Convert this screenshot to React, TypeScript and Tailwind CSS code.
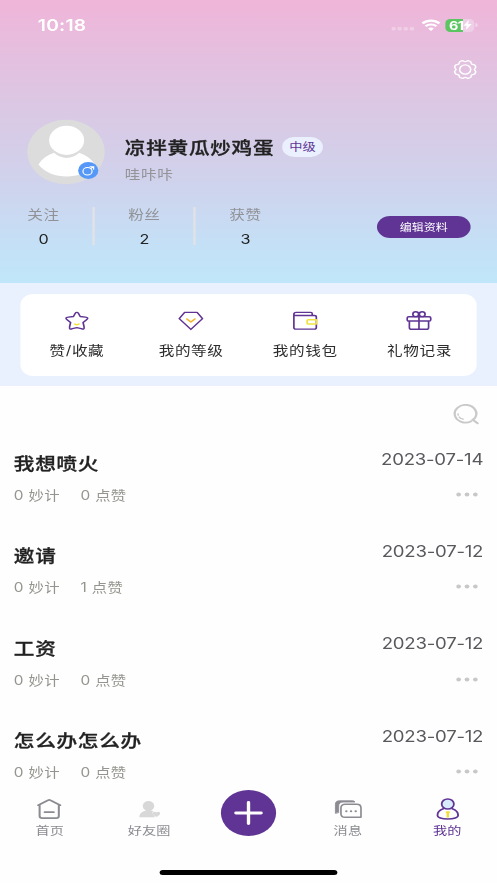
import type { ReactNode } from 'react'

const PURPLE = '#5f3494'

const stats = [
  { label: '关注', value: 0 },
  { label: '粉丝', value: 2 },
  { label: '获赞', value: 3 },
]

const notes = [
  { title: '我想喷火', likes: 0, date: '2023-07-14' },
  { title: '邀请', likes: 1, date: '2023-07-12' },
  { title: '工资', likes: 0, date: '2023-07-12' },
  { title: '怎么办怎么办', likes: 0, date: '2023-07-12' },
]

function StatusBar() {
  return (
    <div className="flex h-[50px] items-center justify-between pl-[31.5px] pr-[16.5px] text-white">
      <span className="text-[16px] font-semibold leading-none tracking-[0.2px]">10:18</span>
      <div className="flex items-center">
        <svg width="20" height="4" viewBox="0 0 20 4" className="mr-[5px] mt-[7px]" fill="#fff" fillOpacity=".3">
          <rect x="0" width="3.6" height="3.6" rx="1.3" />
          <rect x="5.1" width="3.6" height="3.6" rx="1.3" />
          <rect x="10.2" width="3.6" height="3.6" rx="1.3" />
          <rect x="15.3" width="3.6" height="3.6" rx="1.3" />
        </svg>
        <svg width="16" height="12" viewBox="0 0 16 12" className="mr-[4.5px]" fill="none" stroke="#fff" strokeWidth="2.2">
          <path d="M.9 4.4C4.9.6 11.1.6 15.1 4.4" />
          <path d="M3.5 7.3c2.5-2.4 6.5-2.4 9 0" />
          <path d="M8 12 5.6 9.5c1.3-1.3 3.5-1.3 4.8 0Z" fill="#fff" stroke="none" />
        </svg>
        <div className="flex h-[13px] w-6 items-center overflow-hidden rounded-[4px] bg-[linear-gradient(90deg,#5bc562_61%,#efcfe8_61%)] pl-[3px]">
          <span className="text-[12px] font-bold leading-[13px] tracking-[-0.4px]">61</span>
          <svg width="7" height="10" viewBox="0 0 7 10" fill="#fff" className="shrink-0">
            <path d="M4.600 0 0 5.700h2.700L2 10l5-5.900H4Z" />
          </svg>
        </div>
        <span className="ml-px h-1 w-[1.5px] rounded-r bg-white/40" />
      </div>
    </div>
  )
}

function GearIcon() {
  return (
    <svg width="21" height="21" viewBox="0 0 21 21" fill="none" stroke="#fff" strokeWidth="1.3" strokeLinejoin="round">
      <path d="M8.1 1.7c.7-.4 1.1 1 2.4 1s1.7-1.4 2.4-1l2 .8c.8.4.1 1.5 1 2.5s2.2.3 2.6 1.1l.8 2c.3.8-1.1 1.1-1.1 2.4s1.4 1.6 1.1 2.4l-.8 2c-.4.8-1.7.1-2.6 1.1s-.2 2.1-1 2.5l-2 .8c-.7.3-1.1-1-2.4-1s-1.7 1.3-2.4 1l-2-.8c-.8-.4-.1-1.5-1-2.5s-2.2-.3-2.6-1.1l-.8-2c-.3-.8 1.1-1.1 1.1-2.4S1.4 8.900 1.700 8.100l.8-2c.4-.8 1.700-.1 2.600-1.100s.2-2.100 1-2.500Z" />
      <circle cx="10.5" cy="10.5" r="4.6" />
    </svg>
  )
}

function Avatar() {
  return (
    <svg width="66" height="66" viewBox="0 0 66 66" fill="none">
      <circle cx="33" cy="33" r="32.3" fill="#dcdcdc" />
      <circle cx="33.5" cy="21.3" r="14.6" fill="#fff" />
      <path d="M10 45.500C13 40 17.500 36 23 33.800c6 6.800 15 6.800 21 0 5.500 2.200 10 6.200 13 11.700C51 54 42.500 57.500 33.500 57.500S16 54 10 45.500Z" fill="#fff" />
      <circle cx="51.5" cy="51.5" r="8.400" fill="#5598f8" />
      <g stroke="#fff" strokeWidth="1" strokeLinecap="round">
        <circle cx="50.900" cy="52.200" r="3.800" />
        <path d="m53.600 49.600 2-1.700m-2.600-.2h3v2.600" />
      </g>
    </svg>
  )
}

function Profile() {
  return (
    <header className="h-[283px] bg-[linear-gradient(180deg,#f0b6d9_0px,#edb7da_12px,#dcc7e3_100px,#d0d2ec_180px,#c4e0f6_245px,#c0e6fa_283px)]">
      <StatusBar />
      <div className="flex justify-end pr-[16.5px] pt-[8.5px]">
        <GearIcon />
      </div>
      <div className="mt-[39.5px] flex pl-[21.5px]">
        <Avatar />
        <div className="pl-[16.5px] pt-[17px]">
          <div className="flex items-center">
            <h1 className="text-[17.2px] font-medium leading-[24px] tracking-[0.6px] text-[#222] [-webkit-text-stroke:0.3px_#222]">
              凉拌黄瓜炒鸡蛋
            </h1>
            <span className="relative -top-px ml-[6.5px] h-5 w-[34px] rounded-full bg-[#eaf0fe] text-center text-[11px] leading-[20px] text-[#5f3494]">
              中级
            </span>
          </div>
          <p className="mt-[4px] text-[13px] leading-[20px] tracking-[0.5px] text-[#939398]">哇咔咔</p>
        </div>
      </div>
      <div className="mt-[19px] flex items-start">
        <div className="-ml-[5.5px] flex w-[245px]">
          {stats.map((s, i) => (
            <div key={s.label} className="flex w-[84px] shrink-0 justify-between">
              <div className="flex-1 text-center">
                <div className="text-[13px] leading-[20px] tracking-[0.5px] text-[#919297]">{s.label}</div>
                <div className="mt-[6px] text-[13.5px] leading-[18px] text-[#222]">{s.value}</div>
              </div>
              {i < 2 && <span className="-ml-px mt-[3px] h-[38px] w-[1.5px] bg-[#e1e2e6]" />}
            </div>
          ))}
        </div>
        <button className="ml-auto mr-[22px] mt-[12px] h-[22px] w-[78px] rounded-full bg-[#5f3494] text-[10px] leading-[22px] text-white">
          编辑资料
        </button>
      </div>
    </header>
  )
}

function Shortcut({ label, children }: { label: string; children: ReactNode }) {
  return (
    <div className="flex flex-1 flex-col items-center pt-[16px]">
      <svg width="22" height="22" viewBox="0 0 22 22" fill="none" stroke={PURPLE} strokeWidth="1.4" strokeLinejoin="round" strokeLinecap="round">
        {children}
      </svg>
      <span className="mt-[8px] text-[13px] leading-[20px] tracking-[0.5px] text-[#2c2c2c]">{label}</span>
    </div>
  )
}

function Shortcuts() {
  return (
    <section className="h-[103px] bg-[#eaf1fe] pl-[16.5px] pr-[17px] pt-[11px]">
      <div className="flex h-[82px] rounded-[11px] bg-white">
        <Shortcut label="赞/收藏">
          <path d="M9.700 3.300c.6-1.200 2-1.200 2.600 0l1.500 3.200 4.300.6c2.200.3 2.500 1.300 1 2.700l-2.900 2.700.8 4.200c.4 2.300-.3 2.900-2.300 1.900L11 17.600l-3.700 1c-2 1-2.700.4-2.300-1.900l.8-4.200-2.900-2.700c-1.500-1.400-1.200-2.400 1-2.700l4.300-.6Z" />
          <path d="M9.200 14c.8.9 2.800.9 3.600 0" stroke="#f1e33c" />
        </Shortcut>
        <Shortcut label="我的等级">
          <path d="M5.800 2.400h10.400l4.500 6.200L11 19.400 1.300 8.600Z" />
          <path d="m7.700 9 3.300 3 3.300-3" stroke="#f3b52e" strokeWidth="1.5" />
        </Shortcut>
        <Shortcut label="我的钱包">
          <path d="M1.800 4.300c0-1.200.7-1.900 1.900-1.900h12.200c.8 0 1.200.5 1.200 1.300v1.800M1.800 4.300v13.200c0 1 .6 1.600 1.600 1.600h15.500c1 0 1.600-.6 1.600-1.600V7.100c0-1-.6-1.600-1.600-1.600H3c-.8 0-1.200-.5-1.200-1.200Z" />
          <path d="M20.500 9.700h-6.700c-.6 0-.9.3-.9.9v2.600c0 .6.3.9.9.9h6.700Z" stroke="#f1e33c" strokeWidth="1.5" />
        </Shortcut>
        <Shortcut label="礼物记录">
          <path d="M2.400 6.700h17.200c.8 0 1.200.4 1.200 1.200v1.900c0 .8-.4 1.200-1.200 1.200H2.400c-.8 0-1.200-.4-1.200-1.200V7.900c0-.8.4-1.200 1.200-1.200ZM3 11.200v6.200c0 1.300.6 1.900 1.900 1.900h12.200c1.300 0 1.900-.6 1.900-1.900v-6.200M11 6.700v12.600" />
          <circle cx="8.300" cy="4.200" r="2.400" />
          <circle cx="13.700" cy="4.200" r="2.400" />
        </Shortcut>
      </div>
    </section>
  )
}

function NoteList() {
  return (
    <main className="h-[402px] overflow-hidden">
      <div className="flex h-[61.5px] justify-end pr-[15.5px] pt-[17.5px]">
        <svg width="22" height="21" viewBox="0 0 22 21" fill="none" stroke="#c9c9c9" strokeWidth="1.9" strokeLinecap="round">
          <path d="M15.500 17.200A9 8.800 0 1 1 18.500 14.200l-1.700 1.500 4 3.600" />
          <path d="M4.500 10c.3 2.700 2 4.800 4.300 5.200" strokeWidth="1.3" strokeDasharray="1 2.200 6" />
        </svg>
      </div>
      {notes.map((n) => (
        <div key={n.title} className="flex h-[92.4px] justify-between pl-[11.5px] pr-[11.5px]">
          <div>
            <h2 className="mt-[3.5px] text-[17.2px] font-medium leading-[26px] tracking-[0.6px] text-[#222] [-webkit-text-stroke:0.3px_#222]">
              {n.title}
            </h2>
            <div className="mt-[9px] flex gap-[17px] text-[12.8px] leading-[20px] tracking-[0.3px] text-[#95958f]">
              <span>0 妙计</span>
              <span>{n.likes} 点赞</span>
            </div>
          </div>
          <div className="flex flex-col items-end">
            <span className="text-[15.5px] leading-[24px] tracking-[-0.2px] text-[#58585d]">{n.date}</span>
            <svg width="18" height="5" viewBox="0 0 18 5" className="mr-[5px] mt-[20.5px]" fill="#c8c8c8">
              <circle cx="2" cy="2.5" r="2" />
              <circle cx="9" cy="2.5" r="2" />
              <circle cx="16" cy="2.5" r="2" />
            </svg>
          </div>
        </div>
      ))}
    </main>
  )
}

function Tab({ label, color, children }: { label: string; color: string; children: ReactNode }) {
  return (
    <div className="flex flex-1 flex-col items-center pt-[8px]" style={{ color }}>
      <svg width="26" height="26" viewBox="0 0 26 26" fill="none" stroke="currentColor" strokeWidth="1.5" strokeLinecap="round" strokeLinejoin="round">
        {children}
      </svg>
      <span className="text-[11.8px] leading-[18px] tracking-[0.1px]">{label}</span>
    </div>
  )
}

function TabBar() {
  return (
    <nav className="flex h-[82px]">
      <Tab label="首页" color="#8b8c92">
        <path d="M3.800 9.200 12 4.200c.6-.4 1.400-.4 2 0l8.200 5M5 9v11c0 1.400.8 2.200 2.200 2.200h11.600c1.400 0 2.200-.8 2.200-2.200V9M9.200 16.200h7.600" strokeWidth="1.700" />
      </Tab>
      <Tab label="好友圈" color="#8b8c92">
        <g fill="#d8d8d8" stroke="none">
          <ellipse cx="12.700" cy="10" rx="4.800" ry="4.900" />
          <path d="M5 21.200c.5-4 2.300-5.700 5.500-6.700v-2h4.300v2c.8.2 1.300.4 1.800.7-.9 1.400-.6 2.700.1 3.600l1.500 2.400Z" />
          <path d="M19.300 21c-1.900-1.300-3.100-2.300-3.100-3.700 0-1.700 2.200-2.200 3.100-.8.9-1.400 3.100-.9 3.100.8 0 1.400-1.200 2.400-3.100 3.700Z" />
        </g>
      </Tab>
      <div className="flex flex-1 justify-center pt-[1.5px]">
        <div className="flex h-[46px] w-[46px] items-center justify-center rounded-full bg-[#5f3494]">
          <svg width="24" height="24" viewBox="0 0 24 24" stroke="#fff" strokeWidth="2.8" strokeLinecap="round">
            <path d="M1.500 12h21M12 1.500v21" />
          </svg>
        </div>
      </div>
      <Tab label="消息" color="#8b8c92">
        <path d="M2.400 17V8.200c0-2.300 1.200-3.400 3.400-3.400h10.500c1.200 0 2 .4 2.400 1.200H9.300C6.400 6 5.100 7.400 5.100 10v6.200Z" fill="currentColor" strokeWidth=".8" />
        <path d="M10.500 8.300h9.700c2.200 0 3.500 1.300 3.500 3.600v9.300H10.500c-2.200 0-3.500-1.300-3.500-3.500v-5.800c0-2.300 1.300-3.600 3.500-3.600Z" strokeWidth="1.400" />
        <path d="M11.500 15.200h.01M15.400 15.200h.01M19.300 15.200h.01" strokeWidth="2" />
      </Tab>
      <Tab label="我的" color={PURPLE}>
        <circle cx="13" cy="8" r="5.100" fill="#d8ebfb" />
        <path d="M9.300 12.700c-3.200 1.300-4.900 3.400-4.900 6.500 0 2.300 3.500 3.900 8.600 3.900s8.600-1.600 8.600-3.900c0-3.100-1.700-5.200-4.900-6.500" />
        <path d="M12.200 16.200h1.600M13 16.500v4.200" stroke="#f1df35" strokeWidth="2" />
      </Tab>
    </nav>
  )
}

export default function App() {
  return (
    <div className="h-[883px] w-[497px] overflow-hidden bg-[#fefefe]">
      <div className="h-[883px] w-[414px] origin-top-left scale-x-[1.2005] font-[Inter,'Noto_Sans_CJK_SC',sans-serif]">
        <Profile />
        <Shortcuts />
        <NoteList />
        <TabBar />
        <div className="mx-auto h-[5px] w-[148px] rounded-full bg-black" />
      </div>
    </div>
  )
}
